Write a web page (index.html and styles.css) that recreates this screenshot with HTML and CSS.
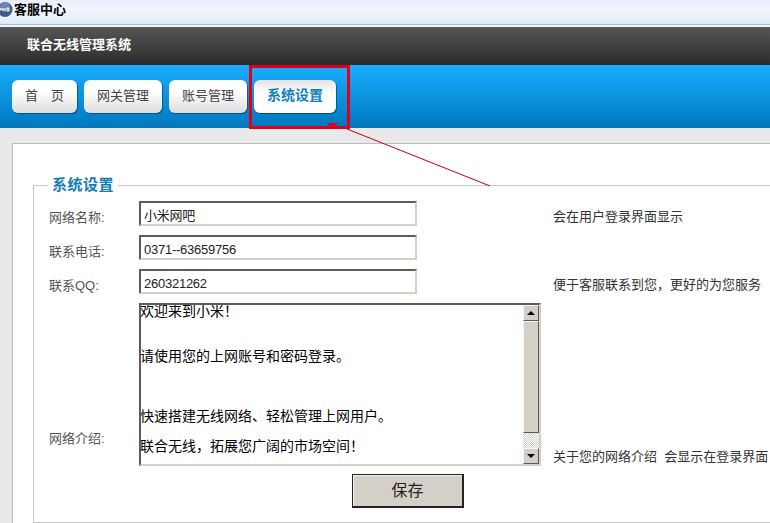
FILE: index.html
```html
<!DOCTYPE html>
<html lang="zh-CN">
<head>
<meta charset="utf-8">
<title>客服中心</title>
<link rel="stylesheet" href="styles.css">
</head>
<body>
<div class="page">
  <div class="titlebar">
    <svg class="app-icon" width="14" height="16" viewBox="0 0 14 16">
      <circle cx="5" cy="8.5" r="7.5" fill="#3d5a8c"/>
      <circle cx="5" cy="6" r="5" fill="#8ba3cc" opacity=".6"/>
      <path d="M0 10V7l1.500 2L3 7v3M5 7v3M7 7v3h2V7H7" fill="none" stroke="#fff" stroke-width="1"/>
    </svg>
    <span class="title-text">客服中心</span>
  </div>
  <div class="brand">联合无线管理系统</div>
  <nav class="nav">
    <a class="tab">首　页</a>
    <a class="tab">网关管理</a>
    <a class="tab">账号管理</a>
    <a class="tab tab-active">系统设置</a>
  </nav>
  <main class="panel">
    <fieldset class="group">
      <legend class="group-title">系统设置</legend>
      <div class="form">
        <label class="label">网络名称:</label>
        <div class="input">小米网吧</div>
        <div class="hint">会在用户登录界面显示</div>

        <label class="label">联系电话:</label>
        <div class="input">0371--63659756</div>
        <div class="hint"></div>

        <label class="label">联系QQ:</label>
        <div class="input">260321262</div>
        <div class="hint">便于客服联系到您，更好的为您服务</div>

        <label class="label label-end">网络介绍:</label>
        <div class="textarea">
          <div class="textarea-text">
            <p class="para para-first">欢迎来到小米！</p>
            <p class="para para-2">请使用您的上网账号和密码登录。</p>
            <p class="para para-3">快速搭建无线网络、轻松管理上网用户。</p>
            <p class="para para-4">联合无线，拓展您广阔的市场空间！</p>
          </div>
          <div class="scrollbar">
            <div class="sb-btn"><span class="arrow-up"></span></div>
            <div class="sb-thumb"></div>
            <div class="sb-track"></div>
            <div class="sb-btn"><span class="arrow-down"></span></div>
          </div>
        </div>
        <div class="hint hint-end">关于您的网络介绍&nbsp;&nbsp;会显示在登录界面</div>
      </div>
      <div class="actions"><button class="save" type="button">保存</button></div>
    </fieldset>
  </main>
  <svg class="callout" width="770" height="200" viewBox="0 0 770 200">
    <rect x="250.500" y="66.500" width="98" height="61" fill="none" stroke="#e0001b" stroke-width="3"/>
    <path d="M347 129 490 186" stroke="#c00018" stroke-width="1" fill="none"/>
    <path d="M327 123h11l-4 4v1h-3v-1z" fill="#e0001b"/>
  </svg>
</div>
</body>
</html>
```
FILE: styles.css
```css
* { box-sizing: border-box; }
html, body { margin: 0; padding: 0; }
body {
  width: 770px;
  height: 523px;
  overflow: hidden;
  background: #e9e9e9;
  font-family: "Liberation Sans", "Noto Sans CJK SC", sans-serif;
}
.page { position: relative; width: 770px; height: 523px; overflow: hidden; }

.titlebar {
  height: 25px;
  display: flex;
  align-items: flex-start;
  background: linear-gradient(#e6eefa, #f2f7fd 40%, #dfe9f7);
  border-bottom: 1px solid #a9bfdd;
  padding-top: 1px;
}
.app-icon { flex: none; }
.title-text { font-size: 13px; font-weight: 700; line-height: 17px; color: #000; }

.brand {
  height: 40px;
  margin-top: 0;
  border-top: 2px solid #f4f4f4;
  padding: 10px 0 0 27px;
  font-size: 13px;
  line-height: 16px;
  font-weight: 700;
  color: #fff;
  background: linear-gradient(#565656, #2b2b2b);
}

.nav {
  height: 63px;
  padding: 15px 0 0 12px;
  display: flex;
  gap: 7px;
  align-items: flex-start;
  background: linear-gradient(#1aaeff, #0077bd);
}
.tab {
  height: 33px;
  padding: 0 13px;
  border-radius: 6px;
  font-size: 13px;
  line-height: 31px;
  color: #444;
  background: linear-gradient(#ffffff 35%, #dcdcdc);
  box-shadow: 1px 1px 1px rgba(0, 50, 90, .6);
}
.tab-active {
  font-size: 14px;
  font-weight: 700;
  line-height: 30px;
  color: #0f80b8;
  background: linear-gradient(#e2e2e2, #ffffff 40%);
}

.panel {
  margin: 15px 0 0 12px;
  width: 800px;
  height: 420px;
  background: #fff;
  border: 1px solid #bdbdbd;
  padding: 32px 0 0 20px;
}
.group {
  margin: 0;
  padding: 7px 0 0 15px;
  width: 790px;
  height: 347px;
  border: 1px solid #c8c8c8;
  min-inline-size: 0;
}
.group-title {
  margin-left: -1px;
  padding: 0 4px;
  font-size: 15px;
  letter-spacing: .5px;
  line-height: 18px;
  font-weight: 700;
  color: #0f7db5;
}
.form {
  display: grid;
  grid-template-columns: 90px 278px 136px 1fr;
  grid-template-rows: 25px 25px 25px 163px;
  row-gap: 9px;
}
.label { font-size: 13px; line-height: 16px; color: #555; padding-top: 9px; grid-column: 1; }
.label-end { align-self: end; padding: 0 0 19px; }
.input {
  grid-column: 2;
  border: 2px solid;
  border-color: #5c5c5c #d4d0c8 #d4d0c8 #5c5c5c;
  font-size: 13px;
  letter-spacing: -.25px;
  line-height: 20px;
  padding: 3px 2px 0 3px;
  color: #222;
  background: #fff;
}
.hint {
  grid-column: 4;
  font-size: 13px;
  line-height: 16px;
  color: #333;
  padding-top: 8px;
  white-space: nowrap;
}
.hint-end { align-self: end; padding: 0 0 1px; }
.textarea {
  grid-column: 2 / 4;
  width: 402px;
  display: flex;
  border: 2px solid;
  border-color: #5c5c5c #d4d0c8 #d4d0c8 #5c5c5c;
  overflow: hidden;
}
.textarea-text { flex: 1; overflow: hidden; font-size: 14px; line-height: 15px; color: #000; margin-left: -1px; }
.para { margin: 0; white-space: nowrap; }
.para-first { margin-top: -1px; }
.para-2 { margin-top: 30px; }
.para-3 { margin-top: 45px; }
.para-4 { margin-top: 15px; }
.scrollbar { width: 16px; flex: none; display: flex; flex-direction: column; }
.sb-btn {
  height: 16px;
  flex: none;
  display: flex;
  align-items: center;
  justify-content: center;
  background: #d4d0c8;
  border: 1px solid;
  border-color: #f4f3ef #5a5a56 #5a5a56 #f4f3ef;
}
.sb-thumb {
  height: 112px;
  flex: none;
  background: #d4d0c8;
  border: 1px solid;
  border-color: #f4f3ef #5a5a56 #5a5a56 #f4f3ef;
}
.sb-track {
  flex: 1;
  background: repeating-conic-gradient(#d4d0c8 0 25%, #fff 0 50%) 0 0 / 2px 2px;
}
.arrow-up { width: 0; height: 0; border: 4px solid transparent; border-top: 0; border-bottom-color: #000; }
.arrow-down { width: 0; height: 0; border: 4px solid transparent; border-bottom: 0; border-top-color: #000; }
.actions { padding: 8px 0 0 303px; }
.save {
  display: block;
  width: 112px;
  height: 34px;
  padding: 0;
  font: 16px/1 "Liberation Sans", "Noto Sans CJK SC", sans-serif;
  color: #222;
  background: #d4d0c8;
  border: 1px solid;
  border-color: #222;
  border-right-width: 2px;
  border-bottom-width: 2px;
  box-shadow: inset 1px 1px 0 #f4f3ef;
}
.callout { position: absolute; left: 0; top: 0; pointer-events: none; }
```
